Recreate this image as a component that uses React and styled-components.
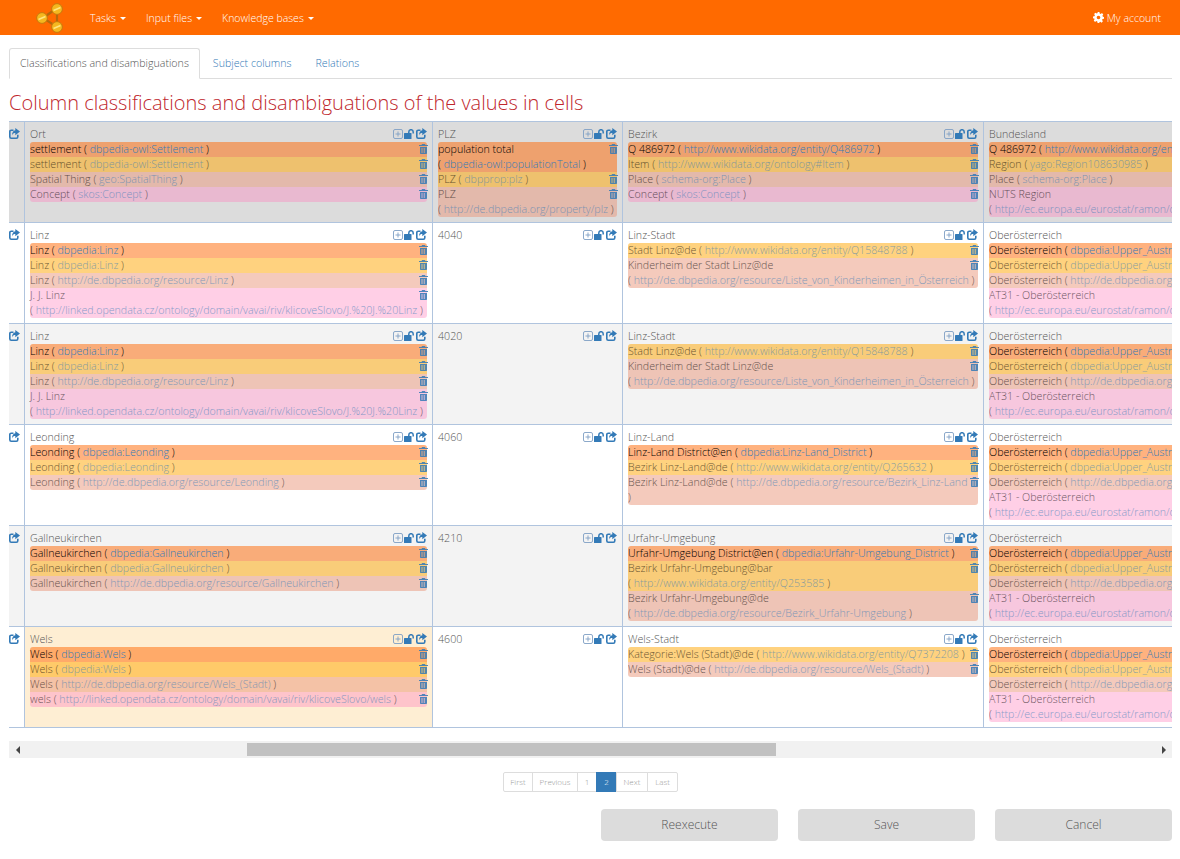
import React from 'react';
import styled, { createGlobalStyle } from 'styled-components';

const GlobalStyle = createGlobalStyle`
  html, body {
    margin: 0;
    padding: 0;
    background: #fff;
    font-family: "Open Sans", "Liberation Sans", sans-serif;
    font-size: 10.5px;
    font-weight: 300;
    color: #555;
  }
  * { box-sizing: border-box; }
`;

const PILL_COLORS = [
  'rgba(255, 102, 0, 0.5)',
  'rgba(255, 165, 0, 0.5)',
  'rgba(233, 150, 122, 0.5)',
  'rgba(255, 130, 190, 0.38)',
];

const WD = 'http://www.wikidata.org/entity/';
const DE = 'http://de.dbpedia.org/resource/';
const CZ = 'http://linked.opendata.cz/ontology/domain/vavai/riv/klicoveSlovo/';
const NUTS = 'http://ec.europa.eu/eurostat/ramon/ontologies/geographic.rdf#AT31_Oberoesterreich';

const austria = [
  ['Oberösterreich', 'dbpedia:Upper_Austria', 0],
  ['Oberösterreich', 'dbpedia:Upper_Austria', 1],
  ['Oberösterreich', DE + 'Oberösterreich', 2],
  ['AT31 - Oberösterreich', NUTS, 3],
];

const heads = {
  ort: [
    ['settlement', 'dbpedia-owl:Settlement', 0],
    ['settlement', 'dbpedia-owl:Settlement', 1],
    ['Spatial Thing', 'geo:SpatialThing', 2],
    ['Concept', 'skos:Concept', 3],
  ],
  plz: [
    ['population total', 'dbpedia-owl:populationTotal', 0],
    ['PLZ', 'dbpprop:plz', 1],
    ['PLZ', 'http://de.dbpedia.org/property/plz', 2],
  ],
  bezirk: [
    ['Q 486972', WD + 'Q486972', 0],
    ['Item', 'http://www.wikidata.org/ontology#Item', 1],
    ['Place', 'schema-org:Place', 2],
    ['Concept', 'skos:Concept', 3],
  ],
  land: [
    ['Q 486972', WD + 'Q486972', 0],
    ['Region', 'yago:Region108630985', 1],
    ['Place', 'schema-org:Place', 2],
    ['NUTS Region', 'http://ec.europa.eu/eurostat/ramon/ontologies/geographic.rdf#NUTSRegion', 3],
  ],
};

const city = (name) => [
  [name, `dbpedia:${name}`, 0],
  [name, `dbpedia:${name}`, 1],
  [name, DE + name, 2],
];

const kinder = (name) => [
  [`${name}@de`, WD + 'Q15848788', 1],
  [`Kinderheim der ${name}@de`, DE + 'Liste_von_Kinderheimen_in_Österreich', 2],
];

const rows = [
  {
    tone: 'head',
    cells: [['Ort', heads.ort], ['PLZ', heads.plz], ['Bezirk', heads.bezirk], ['Bundesland', heads.land]],
  },
  {
    tone: 'odd',
    cells: [
      ['Linz', [...city('Linz'), ['J. J. Linz', CZ + 'J.%20J.%20Linz', 3]]],
      ['4040', []],
      ['Linz-Stadt', kinder('Stadt Linz')],
      ['Oberösterreich', austria],
    ],
  },
  {
    tone: 'even',
    cells: [
      ['Linz', [...city('Linz'), ['J. J. Linz', CZ + 'J.%20J.%20Linz', 3]]],
      ['4020', []],
      ['Linz-Stadt', kinder('Stadt Linz')],
      ['Oberösterreich', austria],
    ],
  },
  {
    tone: 'odd',
    cells: [
      ['Leonding', city('Leonding')],
      ['4060', []],
      ['Linz-Land', [
        ['Linz-Land District@en', 'dbpedia:Linz-Land_District', 0],
        ['Bezirk Linz-Land@de', WD + 'Q265632', 1],
        ['Bezirk Linz-Land@de', DE + 'Bezirk_Linz-Land', 2],
      ]],
      ['Oberösterreich', austria],
    ],
  },
  {
    tone: 'even',
    cells: [
      ['Gallneukirchen', city('Gallneukirchen')],
      ['4210', []],
      ['Urfahr-Umgebung', [
        ['Urfahr-Umgebung District@en', 'dbpedia:Urfahr-Umgebung_District', 0],
        ['Bezirk Urfahr-Umgebung@bar', WD + 'Q253585', 1],
        ['Bezirk Urfahr-Umgebung@de', DE + 'Bezirk_Urfahr-Umgebung', 2],
      ]],
      ['Oberösterreich', austria],
    ],
  },
  {
    tone: 'odd',
    highlight: true,
    cells: [
      ['Wels', [
        ['Wels', 'dbpedia:Wels', 0],
        ['Wels', 'dbpedia:Wels', 1],
        ['Wels', DE + 'Wels_(Stadt)', 2],
        ['wels', CZ + 'wels', 3],
      ]],
      ['4600', []],
      ['Wels-Stadt', [
        ['Kategorie:Wels (Stadt)@de', WD + 'Q7372208', 1],
        ['Wels (Stadt)@de', DE + 'Wels_(Stadt)', 2],
      ]],
      ['Oberösterreich', austria],
    ],
  },
];

const TONES = { head: '#dcdcdc', odd: '#fff', even: '#f3f3f3' };

const Navbar = styled.nav`
  height: 35px;
  background: #ff6a00;
  display: flex;
  align-items: center;
  padding: 0 19px 0 36px;
  color: #fff;
`;

const NavItem = styled.span`
  display: flex;
  align-items: center;
  gap: 4px;
  margin-left: ${(p) => p.$gap}px;
`;

const Caret = styled.i`
  width: 0;
  height: 0;
  margin-top: 1px;
  border-top: 3px solid #fff;
  border-left: 3px solid transparent;
  border-right: 3px solid transparent;
`;

const Account = styled.span`
  margin-left: auto;
  display: flex;
  align-items: center;
  gap: 3px;
`;

const Page = styled.main`
  padding: 13px 8px 0 9px;
`;

const Tabs = styled.ul`
  display: flex;
  margin: 0;
  padding: 0;
  height: 31px;
  list-style: none;
  font-size: 10.65px;
  border-bottom: 1px solid #ddd;
`;

const Tab = styled.li`
  height: 31px;
  padding: 7px 10px 0;
  margin-right: 2px;
  line-height: 14px;
  border: 1px solid ${(p) => (p.$active ? '#ddd' : 'transparent')};
  border-bottom-color: ${(p) => (p.$active ? '#fff' : 'transparent')};
  border-radius: 3px 3px 0 0;
  background: ${(p) => (p.$active ? '#fff' : 'transparent')};
  color: ${(p) => (p.$active ? '#555' : '#337ab7')};
`;

const Title = styled.h2`
  margin: 12px 0 6px;
  height: 24px;
  line-height: 24px;
  font-size: 20px;
  font-weight: 300;
  color: #c0272d;
`;

const TableFrame = styled.section`
  overflow: hidden;
  border-top: 1px solid #b0c4de;
`;

const Row = styled.div`
  display: grid;
  grid-template-columns: 15px 408px 190px 361px 440px;
  width: 1414px;
  height: 101px;
  border-bottom: 1px solid #b0c4de;
  background: ${(p) => TONES[p.$tone]};
`;

const OpenCell = styled.div`
  padding: 6px 0 0 0;
  color: #337ab7;
  line-height: 0;
`;

const Cell = styled.div`
  padding: 5px;
  min-width: 0;
  font-size: 10.65px;
  line-height: 15px;
  border-left: 1px solid #b0c4de;
  background: ${(p) => (p.$highlight ? '#feeed3' : 'transparent')};
`;

const CellHead = styled.div`
  display: flex;
  justify-content: space-between;
  height: 15px;
  color: #555;
`;

const CellTools = styled.span`
  display: flex;
  align-items: center;
  gap: 1px;
  margin-top: -2px;
  color: #337ab7;
`;

const Pill = styled.div`
  display: flow-root;
  min-height: 15px;
  background: ${(p) => PILL_COLORS[p.$rank]};
  border-radius: ${(p) => (p.$first ? '3px 3px 0 0' : p.$last ? '0 0 3px 3px' : '0')};
`;

const PillText = styled.span`
  color: #000;
  opacity: ${(p) => (p.$rank === 0 ? 1 : 0.6)};
`;

const PillLink = styled.a`
  color: #337ab7;
  text-decoration: none;
`;

const NoWrap = styled.span`
  white-space: nowrap;
`;

const Trash = styled.span`
  float: right;
  margin-right: -1px;
  padding-top: 2px;
  line-height: 0;
  color: #337ab7;
`;

const Scrollbar = styled.div`
  display: flex;
  align-items: center;
  height: 17px;
  margin-top: 13px;
  background: #f1f1f1;
`;

const ScrollArrow = styled.span`
  flex: none;
  display: flex;
  justify-content: center;
  width: 17px;
`;

const ScrollArrowLeft = styled.i`
  border-top: 4px solid transparent;
  border-bottom: 4px solid transparent;
  border-right: 4px solid #444;
`;

const ScrollArrowRight = styled.i`
  border-top: 4px solid transparent;
  border-bottom: 4px solid transparent;
  border-left: 4px solid #444;
`;

const ScrollTrack = styled.div`
  flex: 1;
  height: 13px;
  padding-left: 221px;
`;

const ScrollThumb = styled.div`
  width: 529px;
  height: 13px;
  background: #c1c1c1;
`;

const Pager = styled.ul`
  display: flex;
  justify-content: center;
  margin: 14px 0 0;
  padding: 0 0 0 1px;
  list-style: none;
`;

const PageItem = styled.li`
  width: ${(p) => p.$width}px;
  height: 20px;
  margin-left: -1px;
  text-align: center;
  line-height: 18px;
  font-size: 8px;
  border: 1px solid ${(p) => (p.$active ? '#337ab7' : '#ddd')};
  background: ${(p) => (p.$active ? '#337ab7' : '#fff')};
  color: ${(p) => (p.$active ? '#fff' : '#999')};
  &:first-child { border-radius: 2px 0 0 2px; }
  &:last-child { border-radius: 0 2px 2px 0; }
`;

const Actions = styled.div`
  display: flex;
  justify-content: flex-end;
  gap: 20px;
  margin-top: 17px;
`;

const ActionButton = styled.button`
  width: 177px;
  height: 32px;
  padding: 0 0 2px;
  border: 0;
  border-radius: 4px;
  background: #dcdcdc;
  color: #555;
  font: 300 12px "Open Sans", "Liberation Sans", sans-serif;
`;

const Logo = () => (
  <svg width="30" height="30" viewBox="0 0 30 30">
    <path d="M7 15 L21 5 L21 24 Z" fill="none" stroke="#b8690a" strokeWidth="2.2" />
    {[[6, 15], [21, 6], [21, 24]].map(([cx, cy]) => (
      <g key={cx + cy}>
        <circle cx={cx} cy={cy} r="5.4" fill="#f5b81f" stroke="#c9780c" strokeWidth="1" />
        <path d={`M${cx - 3.5} ${cy + 1.5} L${cx + 3.5} ${cy - 1.5}`} stroke="#ffe680" strokeWidth="1.6" />
      </g>
    ))}
  </svg>
);

const Gear = () => (
  <svg width="11" height="11" viewBox="0 0 12 12" fill="#fff">
    <path fillRule="evenodd" d="M5 0h2l.3 1.6 1.1.5L9.8 1.2l1.4 1.4-.9 1.4.5 1.1 1.2.3v2l-1.6.3-.5 1.1.9 1.4-1.4 1.4-1.4-.9-1.1.5L7 12H5l-.3-1.6-1.1-.5-1.4.9-1.4-1.4.9-1.4-.5-1.1L0 7V5l1.6-.3.5-1.1-.9-1.4 1.4-1.4 1.4.9 1.1-.5zM6 4a2 2 0 1 0 0 4 2 2 0 0 0 0-4z" />
  </svg>
);

const ExpandIcon = () => (
  <svg width="10" height="10" viewBox="0 0 10 10" fill="none" stroke="#7f9fc4" strokeWidth="0.9">
    <rect x="0.5" y="0.5" width="9" height="9" rx="1.5" />
    <path d="M5 2.5v5M2.5 5h5" />
  </svg>
);

const LockIcon = () => (
  <svg width="11" height="10" viewBox="0 0 11 10" fill="currentColor">
    <rect x="0" y="4" width="7.5" height="6" rx="0.6" />
    <path d="M4.8 5V2.9a2.2 2.2 0 0 1 4.4 0v1.6" fill="none" stroke="currentColor" strokeWidth="1.5" />
  </svg>
);

const ShareIcon = ({ size = 11 }) => (
  <svg width={size} height={size} viewBox="0 0 11 11" fill="none" stroke="currentColor">
    <path d="M8.8 6.8v2a1.4 1.4 0 0 1-1.4 1.4H2.2A1.4 1.4 0 0 1 .8 8.8V3.6a1.4 1.4 0 0 1 1.4-1.4h2.3" strokeWidth="1.6" />
    <path d="M6.3 0 11 3.6 6.3 7.2V5C4.8 5 3.8 5.6 3 7.4 3 4.6 4.4 2.4 6.3 2.2z" fill="currentColor" stroke="none" />
  </svg>
);

const TrashIcon = () => (
  <svg width="9" height="10" viewBox="0 0 9 10" fill="currentColor" opacity="0.85">
    <path d="M3 0h3l.4 1H9v1H0V1h2.6z" />
    <path fillRule="evenodd" d="M1 3h7v6.2a.8.8 0 0 1-.8.8H1.8a.8.8 0 0 1-.8-.8zM2.6 4v5h.8V4zm2.2 0v5h.8V4z" />
  </svg>
);

function Annotation({ label, link, rank, first, last }) {
  return (
    <Pill $rank={rank} $first={first} $last={last}>
      <Trash><TrashIcon /></Trash>
      <PillText $rank={rank}>
        {label} <NoWrap>( <PillLink href="#">{link}</PillLink></NoWrap> )
      </PillText>
    </Pill>
  );
}

function DataCell({ title, items, highlight }) {
  return (
    <Cell $highlight={highlight}>
      <CellHead>
        {title}
        <CellTools>
          <ExpandIcon />
          <LockIcon />
          <ShareIcon />
        </CellTools>
      </CellHead>
      {items.map(([label, link, rank], i) => (
        <Annotation
          key={i}
          label={label}
          link={link}
          rank={rank}
          first={i === 0}
          last={i === items.length - 1}
        />
      ))}
    </Cell>
  );
}

export default function App() {
  return (
    <>
      <GlobalStyle />
      <Navbar>
        <Logo />
        <NavItem $gap={24}>Tasks <Caret /></NavItem>
        <NavItem $gap={20}>Input files <Caret /></NavItem>
        <NavItem $gap={20}>Knowledge bases <Caret /></NavItem>
        <Account><Gear /> My account</Account>
      </Navbar>
      <Page>
        <Tabs>
          <Tab $active>Classifications and disambiguations</Tab>
          <Tab>Subject columns</Tab>
          <Tab>Relations</Tab>
        </Tabs>
        <Title>Column classifications and disambiguations of the values in cells</Title>
        <TableFrame>
          {rows.map((row, i) => (
            <Row key={i} $tone={row.tone}>
              <OpenCell><ShareIcon /></OpenCell>
              {row.cells.map(([title, items], j) => (
                <DataCell key={j} title={title} items={items} highlight={row.highlight && j === 0} />
              ))}
            </Row>
          ))}
        </TableFrame>
        <Scrollbar>
          <ScrollArrow><ScrollArrowLeft /></ScrollArrow>
          <ScrollTrack><ScrollThumb /></ScrollTrack>
          <ScrollArrow><ScrollArrowRight /></ScrollArrow>
        </Scrollbar>
        <Pager>
          <PageItem $width={30}>First</PageItem>
          <PageItem $width={46}>Previous</PageItem>
          <PageItem $width={20}>1</PageItem>
          <PageItem $width={21} $active>2</PageItem>
          <PageItem $width={32}>Next</PageItem>
          <PageItem $width={31}>Last</PageItem>
        </Pager>
        <Actions>
          <ActionButton>Reexecute</ActionButton>
          <ActionButton>Save</ActionButton>
          <ActionButton>Cancel</ActionButton>
        </Actions>
      </Page>
    </>
  );
}
